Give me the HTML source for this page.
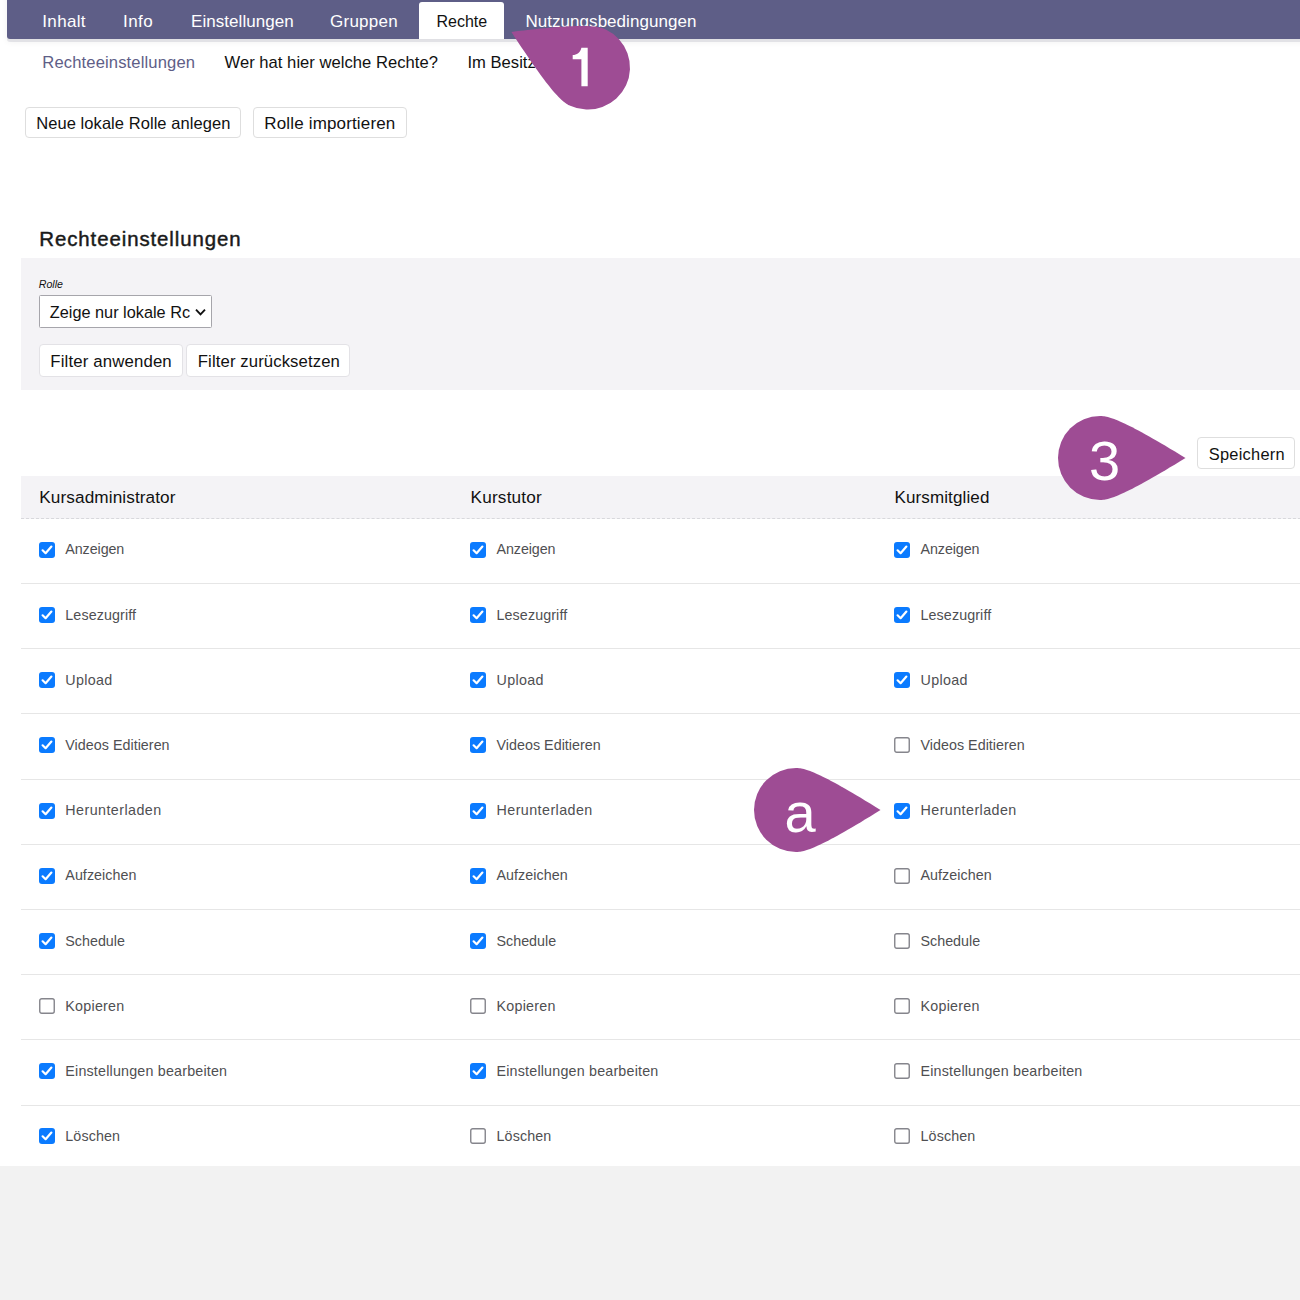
<!DOCTYPE html>
<html><head><meta charset="utf-8"><style>
html,body{margin:0;padding:0;}
body{width:1300px;height:1300px;position:relative;overflow:hidden;background:#fff;font-family:"Liberation Sans",sans-serif;}
.t{position:absolute;line-height:1;white-space:nowrap;z-index:5;}
#nav{position:absolute;left:7px;top:-10px;width:1400px;height:49px;background:#5e5e87;border-radius:0 0 0 3px;box-shadow:0 3px 0 rgba(50,50,90,0.10),0 3px 7px rgba(0,0,0,0.06);z-index:2;}
#tabact{position:absolute;left:419px;top:2px;width:85px;height:37px;background:#fff;border-radius:3px 3px 0 0;z-index:3;}
.btn{position:absolute;box-sizing:border-box;border:1px solid #dedede;border-radius:4px;background:#fff;z-index:4;}
#panel{position:absolute;left:21px;top:258px;width:1300px;height:132px;background:#f4f3f6;z-index:1;}
#sel{position:absolute;left:39px;top:295px;width:173px;height:33px;box-sizing:border-box;border:1px solid #a6a5ab;border-radius:1.5px;background:#fff;z-index:4;}
#chev{position:absolute;left:194px;top:308px;z-index:5;}
#thead{position:absolute;left:21px;top:476px;width:1300px;height:42px;background:#f4f3f6;border-bottom:1px dashed #d8d8dc;z-index:1;}
.rl{position:absolute;left:21px;width:1300px;height:1px;background:#e6e6e6;z-index:1;}
.cb{position:absolute;z-index:5;}
#foot{position:absolute;left:0;top:1166px;width:1300px;height:200px;background:#f2f2f2;z-index:1;}
.co{position:absolute;left:0;top:0;z-index:10;}
</style></head><body>
<div id="nav"></div>
<div id="tabact"></div>
<div class="btn" style="left:25px;top:107px;width:216px;height:31px"></div>
<div class="btn" style="left:253px;top:107px;width:154px;height:31px"></div>
<div id="panel"></div>
<div id="sel"></div>
<svg id="chev" width="14" height="10" viewBox="0 0 14 10"><path d="M2 1.6 L6.5 6.3 L11 1.6" fill="none" stroke="#111" stroke-width="1.9"/></svg>
<div class="btn" style="left:39px;top:344px;width:144px;height:33px;border-color:#e3e2e6"></div>
<div class="btn" style="left:186px;top:344px;width:164px;height:33px;border-color:#e3e2e6"></div>
<div class="btn" style="left:1197px;top:437px;width:98px;height:32px"></div>
<div id="thead"></div>
<div class="rl" style="top:583px"></div>
<svg class="cb" style="left:39px;top:542px" width="16" height="16" viewBox="0 0 16 16"><rect x="0" y="0" width="16" height="16" rx="3" fill="#0b7bff"/><path d="M3.6 8.3 L6.6 11.2 L12.4 4.6" fill="none" stroke="#fff" stroke-width="2.2" stroke-linecap="round" stroke-linejoin="round"/></svg>
<svg class="cb" style="left:470px;top:542px" width="16" height="16" viewBox="0 0 16 16"><rect x="0" y="0" width="16" height="16" rx="3" fill="#0b7bff"/><path d="M3.6 8.3 L6.6 11.2 L12.4 4.6" fill="none" stroke="#fff" stroke-width="2.2" stroke-linecap="round" stroke-linejoin="round"/></svg>
<svg class="cb" style="left:894px;top:542px" width="16" height="16" viewBox="0 0 16 16"><rect x="0" y="0" width="16" height="16" rx="3" fill="#0b7bff"/><path d="M3.6 8.3 L6.6 11.2 L12.4 4.6" fill="none" stroke="#fff" stroke-width="2.2" stroke-linecap="round" stroke-linejoin="round"/></svg>
<div class="rl" style="top:648px"></div>
<svg class="cb" style="left:39px;top:607px" width="16" height="16" viewBox="0 0 16 16"><rect x="0" y="0" width="16" height="16" rx="3" fill="#0b7bff"/><path d="M3.6 8.3 L6.6 11.2 L12.4 4.6" fill="none" stroke="#fff" stroke-width="2.2" stroke-linecap="round" stroke-linejoin="round"/></svg>
<svg class="cb" style="left:470px;top:607px" width="16" height="16" viewBox="0 0 16 16"><rect x="0" y="0" width="16" height="16" rx="3" fill="#0b7bff"/><path d="M3.6 8.3 L6.6 11.2 L12.4 4.6" fill="none" stroke="#fff" stroke-width="2.2" stroke-linecap="round" stroke-linejoin="round"/></svg>
<svg class="cb" style="left:894px;top:607px" width="16" height="16" viewBox="0 0 16 16"><rect x="0" y="0" width="16" height="16" rx="3" fill="#0b7bff"/><path d="M3.6 8.3 L6.6 11.2 L12.4 4.6" fill="none" stroke="#fff" stroke-width="2.2" stroke-linecap="round" stroke-linejoin="round"/></svg>
<div class="rl" style="top:713px"></div>
<svg class="cb" style="left:39px;top:672px" width="16" height="16" viewBox="0 0 16 16"><rect x="0" y="0" width="16" height="16" rx="3" fill="#0b7bff"/><path d="M3.6 8.3 L6.6 11.2 L12.4 4.6" fill="none" stroke="#fff" stroke-width="2.2" stroke-linecap="round" stroke-linejoin="round"/></svg>
<svg class="cb" style="left:470px;top:672px" width="16" height="16" viewBox="0 0 16 16"><rect x="0" y="0" width="16" height="16" rx="3" fill="#0b7bff"/><path d="M3.6 8.3 L6.6 11.2 L12.4 4.6" fill="none" stroke="#fff" stroke-width="2.2" stroke-linecap="round" stroke-linejoin="round"/></svg>
<svg class="cb" style="left:894px;top:672px" width="16" height="16" viewBox="0 0 16 16"><rect x="0" y="0" width="16" height="16" rx="3" fill="#0b7bff"/><path d="M3.6 8.3 L6.6 11.2 L12.4 4.6" fill="none" stroke="#fff" stroke-width="2.2" stroke-linecap="round" stroke-linejoin="round"/></svg>
<div class="rl" style="top:779px"></div>
<svg class="cb" style="left:39px;top:737px" width="16" height="16" viewBox="0 0 16 16"><rect x="0" y="0" width="16" height="16" rx="3" fill="#0b7bff"/><path d="M3.6 8.3 L6.6 11.2 L12.4 4.6" fill="none" stroke="#fff" stroke-width="2.2" stroke-linecap="round" stroke-linejoin="round"/></svg>
<svg class="cb" style="left:470px;top:737px" width="16" height="16" viewBox="0 0 16 16"><rect x="0" y="0" width="16" height="16" rx="3" fill="#0b7bff"/><path d="M3.6 8.3 L6.6 11.2 L12.4 4.6" fill="none" stroke="#fff" stroke-width="2.2" stroke-linecap="round" stroke-linejoin="round"/></svg>
<svg class="cb" style="left:894px;top:737px" width="16" height="16" viewBox="0 0 16 16"><rect x="0.75" y="0.75" width="14.5" height="14.5" rx="2" fill="#fff" stroke="#85858c" stroke-width="1.4"/></svg>
<div class="rl" style="top:844px"></div>
<svg class="cb" style="left:39px;top:803px" width="16" height="16" viewBox="0 0 16 16"><rect x="0" y="0" width="16" height="16" rx="3" fill="#0b7bff"/><path d="M3.6 8.3 L6.6 11.2 L12.4 4.6" fill="none" stroke="#fff" stroke-width="2.2" stroke-linecap="round" stroke-linejoin="round"/></svg>
<svg class="cb" style="left:470px;top:803px" width="16" height="16" viewBox="0 0 16 16"><rect x="0" y="0" width="16" height="16" rx="3" fill="#0b7bff"/><path d="M3.6 8.3 L6.6 11.2 L12.4 4.6" fill="none" stroke="#fff" stroke-width="2.2" stroke-linecap="round" stroke-linejoin="round"/></svg>
<svg class="cb" style="left:894px;top:803px" width="16" height="16" viewBox="0 0 16 16"><rect x="0" y="0" width="16" height="16" rx="3" fill="#0b7bff"/><path d="M3.6 8.3 L6.6 11.2 L12.4 4.6" fill="none" stroke="#fff" stroke-width="2.2" stroke-linecap="round" stroke-linejoin="round"/></svg>
<div class="rl" style="top:909px"></div>
<svg class="cb" style="left:39px;top:868px" width="16" height="16" viewBox="0 0 16 16"><rect x="0" y="0" width="16" height="16" rx="3" fill="#0b7bff"/><path d="M3.6 8.3 L6.6 11.2 L12.4 4.6" fill="none" stroke="#fff" stroke-width="2.2" stroke-linecap="round" stroke-linejoin="round"/></svg>
<svg class="cb" style="left:470px;top:868px" width="16" height="16" viewBox="0 0 16 16"><rect x="0" y="0" width="16" height="16" rx="3" fill="#0b7bff"/><path d="M3.6 8.3 L6.6 11.2 L12.4 4.6" fill="none" stroke="#fff" stroke-width="2.2" stroke-linecap="round" stroke-linejoin="round"/></svg>
<svg class="cb" style="left:894px;top:868px" width="16" height="16" viewBox="0 0 16 16"><rect x="0.75" y="0.75" width="14.5" height="14.5" rx="2" fill="#fff" stroke="#85858c" stroke-width="1.4"/></svg>
<div class="rl" style="top:974px"></div>
<svg class="cb" style="left:39px;top:933px" width="16" height="16" viewBox="0 0 16 16"><rect x="0" y="0" width="16" height="16" rx="3" fill="#0b7bff"/><path d="M3.6 8.3 L6.6 11.2 L12.4 4.6" fill="none" stroke="#fff" stroke-width="2.2" stroke-linecap="round" stroke-linejoin="round"/></svg>
<svg class="cb" style="left:470px;top:933px" width="16" height="16" viewBox="0 0 16 16"><rect x="0" y="0" width="16" height="16" rx="3" fill="#0b7bff"/><path d="M3.6 8.3 L6.6 11.2 L12.4 4.6" fill="none" stroke="#fff" stroke-width="2.2" stroke-linecap="round" stroke-linejoin="round"/></svg>
<svg class="cb" style="left:894px;top:933px" width="16" height="16" viewBox="0 0 16 16"><rect x="0.75" y="0.75" width="14.5" height="14.5" rx="2" fill="#fff" stroke="#85858c" stroke-width="1.4"/></svg>
<div class="rl" style="top:1039px"></div>
<svg class="cb" style="left:39px;top:998px" width="16" height="16" viewBox="0 0 16 16"><rect x="0.75" y="0.75" width="14.5" height="14.5" rx="2" fill="#fff" stroke="#85858c" stroke-width="1.4"/></svg>
<svg class="cb" style="left:470px;top:998px" width="16" height="16" viewBox="0 0 16 16"><rect x="0.75" y="0.75" width="14.5" height="14.5" rx="2" fill="#fff" stroke="#85858c" stroke-width="1.4"/></svg>
<svg class="cb" style="left:894px;top:998px" width="16" height="16" viewBox="0 0 16 16"><rect x="0.75" y="0.75" width="14.5" height="14.5" rx="2" fill="#fff" stroke="#85858c" stroke-width="1.4"/></svg>
<div class="rl" style="top:1105px"></div>
<svg class="cb" style="left:39px;top:1063px" width="16" height="16" viewBox="0 0 16 16"><rect x="0" y="0" width="16" height="16" rx="3" fill="#0b7bff"/><path d="M3.6 8.3 L6.6 11.2 L12.4 4.6" fill="none" stroke="#fff" stroke-width="2.2" stroke-linecap="round" stroke-linejoin="round"/></svg>
<svg class="cb" style="left:470px;top:1063px" width="16" height="16" viewBox="0 0 16 16"><rect x="0" y="0" width="16" height="16" rx="3" fill="#0b7bff"/><path d="M3.6 8.3 L6.6 11.2 L12.4 4.6" fill="none" stroke="#fff" stroke-width="2.2" stroke-linecap="round" stroke-linejoin="round"/></svg>
<svg class="cb" style="left:894px;top:1063px" width="16" height="16" viewBox="0 0 16 16"><rect x="0.75" y="0.75" width="14.5" height="14.5" rx="2" fill="#fff" stroke="#85858c" stroke-width="1.4"/></svg>
<svg class="cb" style="left:39px;top:1128px" width="16" height="16" viewBox="0 0 16 16"><rect x="0" y="0" width="16" height="16" rx="3" fill="#0b7bff"/><path d="M3.6 8.3 L6.6 11.2 L12.4 4.6" fill="none" stroke="#fff" stroke-width="2.2" stroke-linecap="round" stroke-linejoin="round"/></svg>
<svg class="cb" style="left:470px;top:1128px" width="16" height="16" viewBox="0 0 16 16"><rect x="0.75" y="0.75" width="14.5" height="14.5" rx="2" fill="#fff" stroke="#85858c" stroke-width="1.4"/></svg>
<svg class="cb" style="left:894px;top:1128px" width="16" height="16" viewBox="0 0 16 16"><rect x="0.75" y="0.75" width="14.5" height="14.5" rx="2" fill="#fff" stroke="#85858c" stroke-width="1.4"/></svg>
<div class="t" style="left:42.3px;top:13px;font-size:17px;color:#fff;letter-spacing:0.34px;">Inhalt</div>
<div class="t" style="left:123px;top:13px;font-size:17px;color:#fff;letter-spacing:0.433px;">Info</div>
<div class="t" style="left:191px;top:13px;font-size:17px;color:#fff;letter-spacing:0.058px;">Einstellungen</div>
<div class="t" style="left:330px;top:13px;font-size:17px;color:#fff;letter-spacing:0.25px;">Gruppen</div>
<div class="t" style="left:525.5px;top:13px;font-size:17px;color:#fff;letter-spacing:0.039px;">Nutzungsbedingungen</div>
<div class="t" style="left:436.5px;top:14px;font-size:16px;color:#111;">Rechte</div>
<div class="t" style="left:42.3px;top:55px;font-size:16.6px;color:#5e5e87;letter-spacing:0.128px;">Rechteeinstellungen</div>
<div class="t" style="left:224.5px;top:55px;font-size:16.6px;color:#111;letter-spacing:0.027px;">Wer hat hier welche Rechte?</div>
<div class="t" style="left:467.5px;top:55px;font-size:16.6px;color:#111;">Im Besitz von</div>
<div class="t" style="left:36.3px;top:115px;font-size:16.5px;color:#111;letter-spacing:0.058px;">Neue lokale Rolle anlegen</div>
<div class="t" style="left:264.3px;top:115px;font-size:17px;color:#111;letter-spacing:0.156px;">Rolle importieren</div>
<div class="t" style="left:39.3px;top:229px;font-size:20.4px;color:#1a1a1a;letter-spacing:0.92px;-webkit-text-stroke:0.45px #1a1a1a">Rechteeinstellungen</div>
<div class="t" style="left:38.8px;top:279px;font-size:10.6px;color:#111;font-style:italic">Rolle</div>
<div class="t" style="left:49.8px;top:304px;font-size:16.3px;color:#111;letter-spacing:0.0px;">Zeige nur lokale Rc</div>
<div class="t" style="left:50.3px;top:354px;font-size:16.8px;color:#111;letter-spacing:0.143px;">Filter anwenden</div>
<div class="t" style="left:197.8px;top:354px;font-size:16.7px;color:#111;letter-spacing:0.111px;">Filter zurücksetzen</div>
<div class="t" style="left:1208.8px;top:446px;font-size:16.4px;color:#111;letter-spacing:0.25px;">Speichern</div>
<div class="t" style="left:39.3px;top:489px;font-size:17.2px;color:#111;letter-spacing:0.094px;">Kursadministrator</div>
<div class="t" style="left:470.6px;top:489px;font-size:17.2px;color:#111;letter-spacing:0.175px;">Kurstutor</div>
<div class="t" style="left:894.5px;top:489px;font-size:17px;color:#111;letter-spacing:0.118px;">Kursmitglied</div>
<div class="t" style="left:65.3px;top:542px;font-size:14.3px;color:#4f4f52;letter-spacing:-0.086px;">Anzeigen</div>
<div class="t" style="left:496.5px;top:542px;font-size:14.3px;color:#4f4f52;letter-spacing:-0.086px;">Anzeigen</div>
<div class="t" style="left:920.5px;top:542px;font-size:14.3px;color:#4f4f52;letter-spacing:-0.086px;">Anzeigen</div>
<div class="t" style="left:65.3px;top:608px;font-size:14.3px;color:#4f4f52;letter-spacing:0.1px;">Lesezugriff</div>
<div class="t" style="left:496.5px;top:608px;font-size:14.3px;color:#4f4f52;letter-spacing:0.1px;">Lesezugriff</div>
<div class="t" style="left:920.5px;top:608px;font-size:14.3px;color:#4f4f52;letter-spacing:0.1px;">Lesezugriff</div>
<div class="t" style="left:65.3px;top:673px;font-size:14.3px;color:#4f4f52;letter-spacing:0.34px;">Upload</div>
<div class="t" style="left:496.5px;top:673px;font-size:14.3px;color:#4f4f52;letter-spacing:0.34px;">Upload</div>
<div class="t" style="left:920.5px;top:673px;font-size:14.3px;color:#4f4f52;letter-spacing:0.34px;">Upload</div>
<div class="t" style="left:65.3px;top:738px;font-size:14.3px;color:#4f4f52;letter-spacing:0.027px;">Videos Editieren</div>
<div class="t" style="left:496.5px;top:738px;font-size:14.3px;color:#4f4f52;letter-spacing:0.027px;">Videos Editieren</div>
<div class="t" style="left:920.5px;top:738px;font-size:14.3px;color:#4f4f52;letter-spacing:0.027px;">Videos Editieren</div>
<div class="t" style="left:65.3px;top:803px;font-size:14.3px;color:#4f4f52;letter-spacing:0.433px;">Herunterladen</div>
<div class="t" style="left:496.5px;top:803px;font-size:14.3px;color:#4f4f52;letter-spacing:0.433px;">Herunterladen</div>
<div class="t" style="left:920.5px;top:803px;font-size:14.3px;color:#4f4f52;letter-spacing:0.433px;">Herunterladen</div>
<div class="t" style="left:65.3px;top:868px;font-size:14.3px;color:#4f4f52;letter-spacing:0.044px;">Aufzeichen</div>
<div class="t" style="left:496.5px;top:868px;font-size:14.3px;color:#4f4f52;letter-spacing:0.044px;">Aufzeichen</div>
<div class="t" style="left:920.5px;top:868px;font-size:14.3px;color:#4f4f52;letter-spacing:0.044px;">Aufzeichen</div>
<div class="t" style="left:65.3px;top:934px;font-size:14.3px;color:#4f4f52;letter-spacing:0.0px;">Schedule</div>
<div class="t" style="left:496.5px;top:934px;font-size:14.3px;color:#4f4f52;letter-spacing:0.0px;">Schedule</div>
<div class="t" style="left:920.5px;top:934px;font-size:14.3px;color:#4f4f52;letter-spacing:0.0px;">Schedule</div>
<div class="t" style="left:65.3px;top:999px;font-size:14.3px;color:#4f4f52;letter-spacing:0.243px;">Kopieren</div>
<div class="t" style="left:496.5px;top:999px;font-size:14.3px;color:#4f4f52;letter-spacing:0.243px;">Kopieren</div>
<div class="t" style="left:920.5px;top:999px;font-size:14.3px;color:#4f4f52;letter-spacing:0.243px;">Kopieren</div>
<div class="t" style="left:65.3px;top:1064px;font-size:14.3px;color:#4f4f52;letter-spacing:0.191px;">Einstellungen bearbeiten</div>
<div class="t" style="left:496.5px;top:1064px;font-size:14.3px;color:#4f4f52;letter-spacing:0.191px;">Einstellungen bearbeiten</div>
<div class="t" style="left:920.5px;top:1064px;font-size:14.3px;color:#4f4f52;letter-spacing:0.191px;">Einstellungen bearbeiten</div>
<div class="t" style="left:65.3px;top:1129px;font-size:14.3px;color:#4f4f52;letter-spacing:0.117px;">Löschen</div>
<div class="t" style="left:496.5px;top:1129px;font-size:14.3px;color:#4f4f52;letter-spacing:0.117px;">Löschen</div>
<div class="t" style="left:920.5px;top:1129px;font-size:14.3px;color:#4f4f52;letter-spacing:0.117px;">Löschen</div>
<div class="t" style="left:1088.9px;top:433px;font-size:56px;color:#fff;z-index:11">3</div>
<div class="t" style="left:784.6px;top:785px;font-size:56px;color:#fff;z-index:11">a</div>
<div id="foot"></div>
<svg class="co" width="1300" height="1300" viewBox="0 0 1300 1300"><path transform="translate(588,67.6) rotate(205)" d="M84.5 0 C26.8 -36 10 -42 0 -42 A42 42 0 0 0 0 42 C10 42 26.8 36 84.5 0 Z" fill="#9e4c94"/><path d="M587.7 47.7 L587.7 86.2 L581.4 86.2 L581.4 59.2 L572.7 59.2 L572.7 55 C576.8 54.9 580.3 52.5 581.4 47.7 Z" fill="#fff"/><path transform="translate(1100,458)" d="M85.5 0 C26.8 -36 10 -42 0 -42 A42 42 0 0 0 0 42 C10 42 26.8 36 85.5 0 Z" fill="#9e4c94"/><path transform="translate(796,810)" d="M84.5 0 C26.8 -36 10 -42 0 -42 A42 42 0 0 0 0 42 C10 42 26.8 36 84.5 0 Z" fill="#9e4c94"/></svg>
</body></html>
